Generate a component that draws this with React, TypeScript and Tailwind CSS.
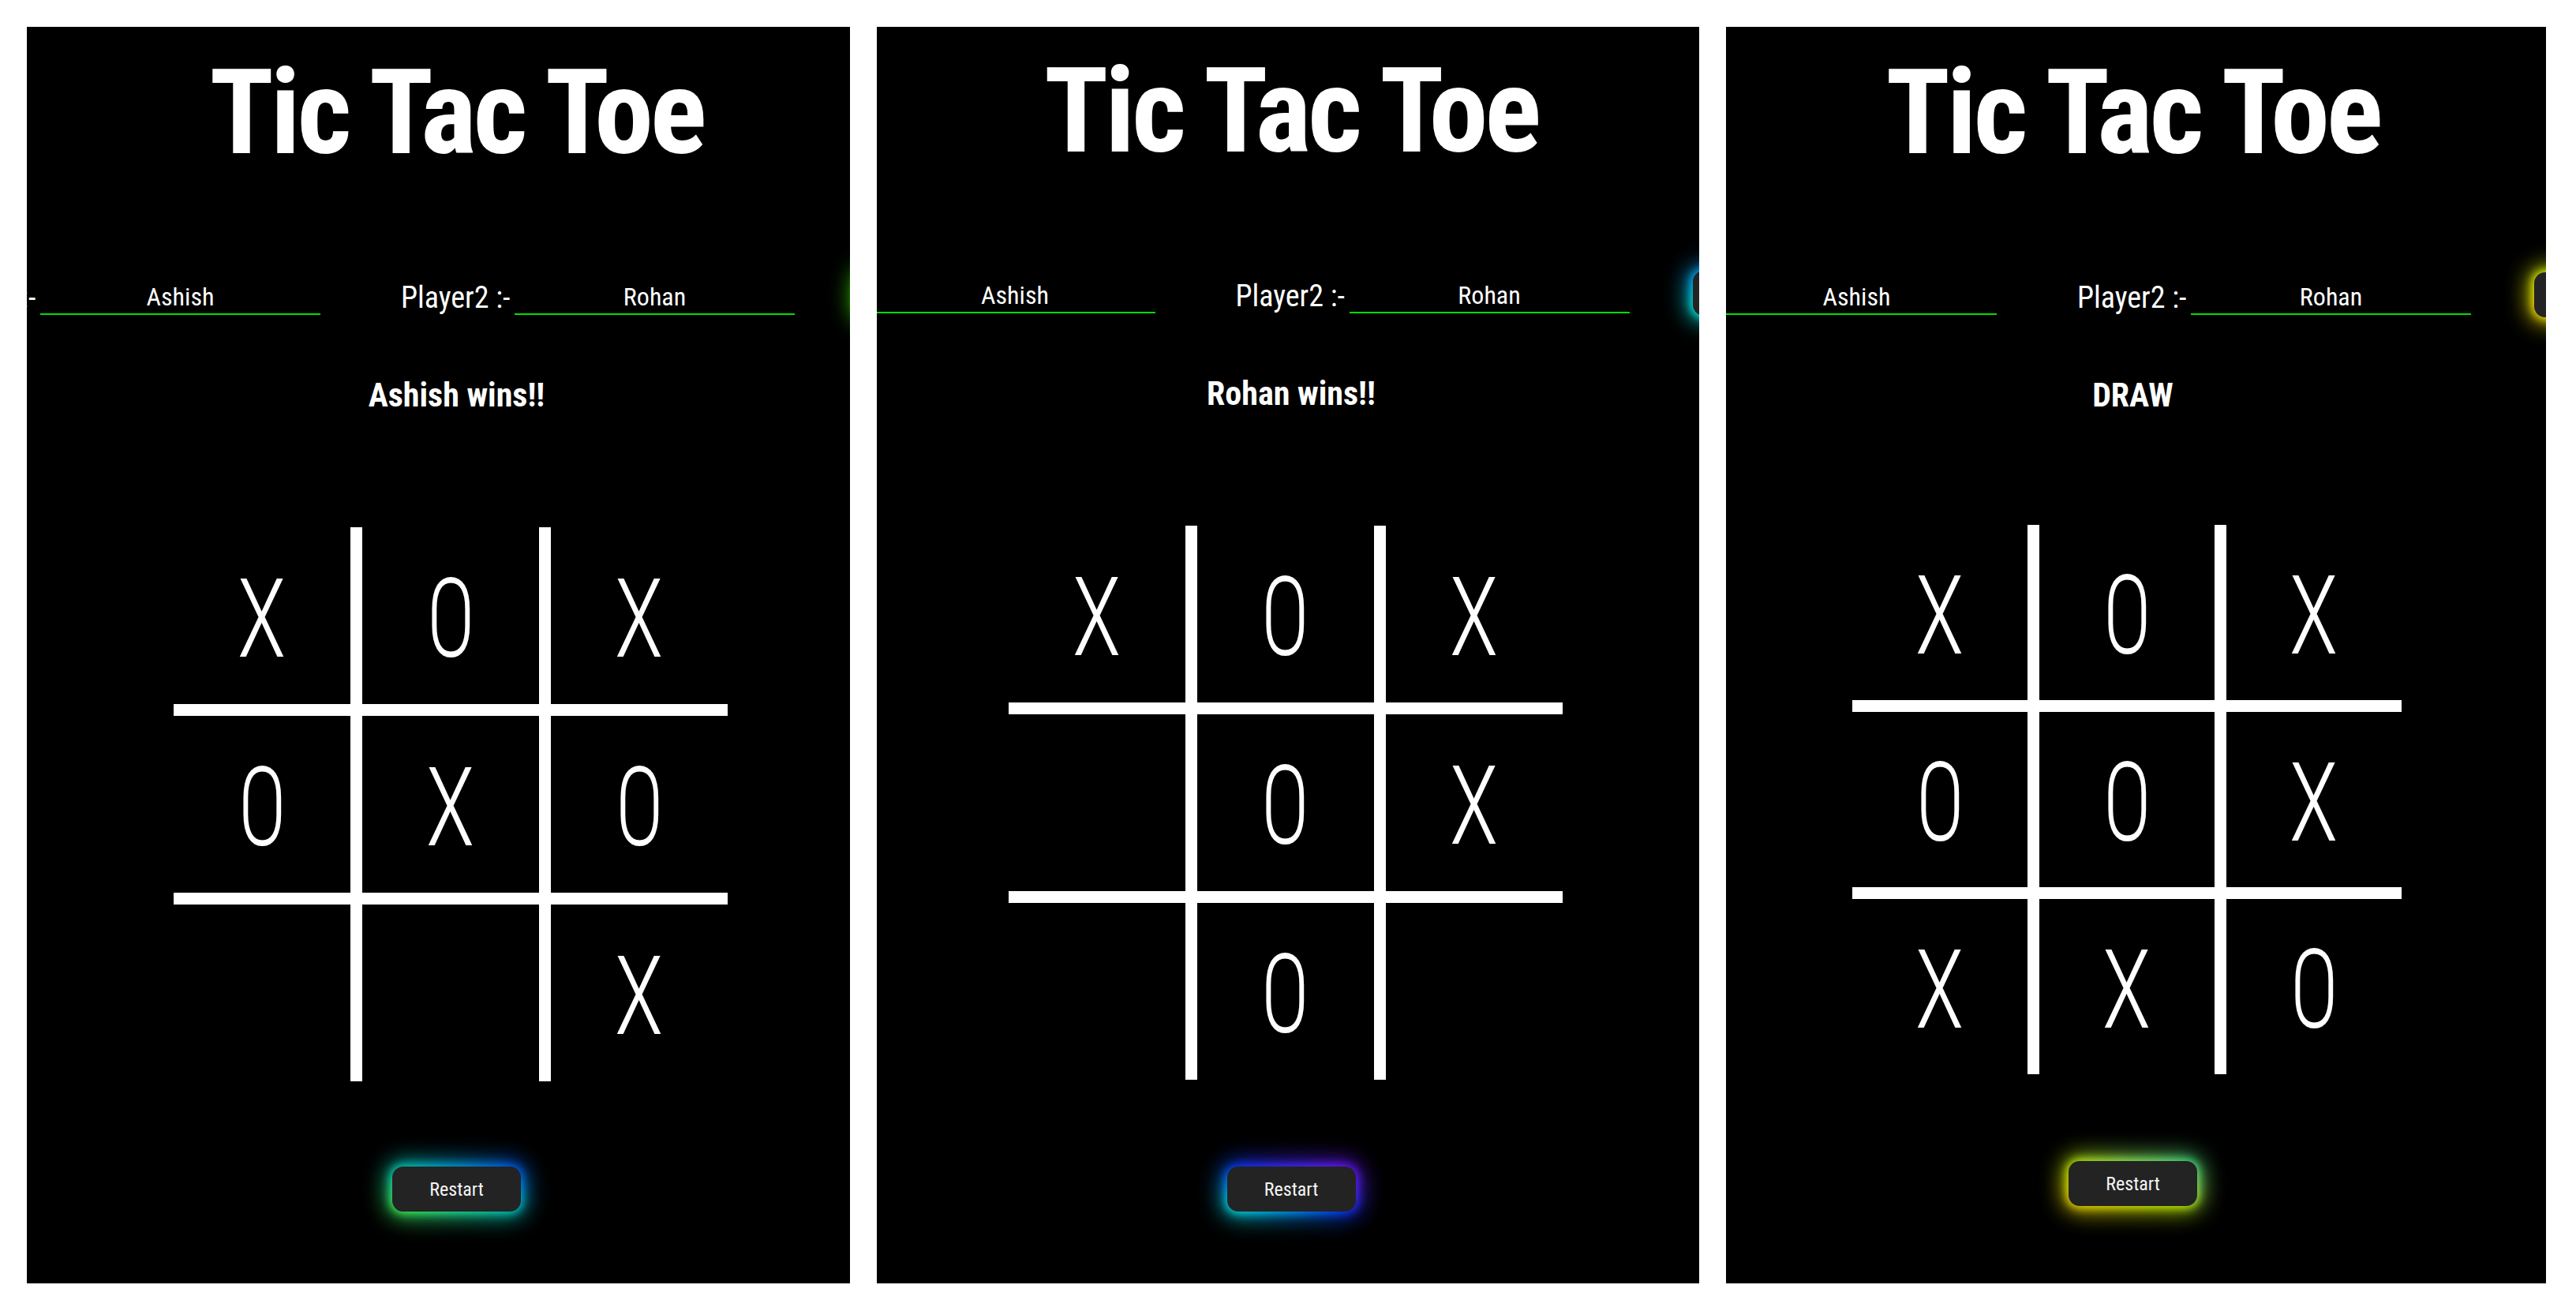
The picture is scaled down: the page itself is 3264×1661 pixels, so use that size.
type Mark = 'X' | 'O' | '';

type PanelConfig = {
  board: Mark[];
  status: string;
  width: string;
  shift: string;
  padTop: string;
  cell: string;
  boardGap: string;
  restartGap: string;
  glow: string;
  topGlow: string;
};

const textFont = "font-['Roboto_Condensed','Roboto',sans-serif]";

const panels: PanelConfig[] = [
  {
    board: ['X', 'O', 'X', 'O', 'X', 'O', '', '', 'X'],
    status: 'Ashish wins!!',
    width: 'w-[1043px]',
    shift: 'ml-[46px]',
    padTop: 'pt-[34px]',
    cell: 'h-[224px] w-[224px]',
    boardGap: 'mt-[146px]',
    restartGap: 'mt-[108px]',
    glow: 'bg-linear-to-tr from-[#48ff00] via-[#00d0c0] to-[#0030ff]',
    topGlow: 'bg-linear-to-tr from-[#48ff00] via-[#30e000] to-[#00d0c0]',
  },
  {
    board: ['X', 'O', 'X', '', 'O', 'X', '', 'O', ''],
    status: 'Rohan wins!!',
    width: 'w-[1042px]',
    shift: 'ml-[8px]',
    padTop: 'pt-[32px]',
    cell: 'h-[224px] w-[224px]',
    boardGap: 'mt-[146px]',
    restartGap: 'mt-[110px]',
    glow: 'bg-linear-to-tr from-[#00ffd5] via-[#0030ff] to-[#7a00ff]',
    topGlow: 'bg-linear-to-tr from-[#00ffd5] via-[#00a0ff] to-[#0030ff]',
  },
  {
    board: ['X', 'O', 'X', 'O', 'O', 'X', 'X', 'X', 'O'],
    status: 'DRAW',
    width: 'w-[1039px]',
    shift: 'mr-[8px]',
    padTop: 'pt-[34px]',
    cell: 'h-[222px] w-[222px]',
    boardGap: 'mt-[143px]',
    restartGap: 'mt-[110px]',
    glow: 'bg-linear-to-tr from-[#ffd800] via-[#b8f000] to-[#00e090]',
    topGlow: 'bg-linear-to-tr from-[#ffe000] via-[#d8f000] to-[#48ff00]',
  },
];

function GlowButton({ label, glow, className }: { label: string; glow: string; className: string }) {
  return (
    <div className={`relative shrink-0 ${className}`}>
      <div className={`absolute -inset-[8px] rounded-[22px] opacity-75 blur-[14px] ${glow}`} />
      <div className={`absolute -inset-[2px] rounded-[16px] blur-[6px] ${glow}`} />
      <button
        className={`relative flex h-[57px] w-[163px] items-center justify-center rounded-[14px] bg-[#232323] text-[24px] leading-none text-[#f4f4f4] ${textFont}`}
      >
        {label}
      </button>
    </div>
  );
}

function Board({ board, cell, gap }: { board: Mark[]; cell: string; gap: string }) {
  return (
    <div className={`grid grid-cols-3 ${gap}`}>
      {board.map((mark, i) => {
        const col = i % 3;
        const row = Math.floor(i / 3);
        return (
          <div
            key={i}
            className={`box-content flex items-center justify-center border-white ${cell} ${
              col < 2 ? 'border-r-[15px]' : ''
            } ${row < 2 ? 'border-b-[15px]' : ''}`}
          >
            <span
              className={`pt-[8px] text-[140px] leading-none font-light text-white ${textFont} ${
                mark === 'O' ? 'scale-x-[0.74]' : 'scale-x-[0.84]'
              }`}
            >
              {mark}
            </span>
          </div>
        );
      })}
    </div>
  );
}

function Panel({ cfg }: { cfg: PanelConfig }) {
  return (
    <div className={`flex h-[1592px] shrink-0 flex-col items-center overflow-hidden bg-black ${cfg.width}`}>
      <div className={`flex flex-col items-center ${cfg.shift} ${cfg.padTop}`}>
        <h1
          className={`h-[150px] text-[150px] leading-[150px] font-bold tracking-[-4px] whitespace-nowrap text-white ${textFont}`}
        >
          Tic Tac Toe
        </h1>

        <div className="mt-[127px] flex items-end">
          <span className={`w-[137px] shrink-0 pb-[3px] text-[38px] leading-[38px] whitespace-nowrap text-white ${textFont}`}>
            Player1 :-
          </span>
          <input
            readOnly
            value="Ashish"
            className={`ml-[7px] h-[44px] w-[355px] shrink-0 border-b-2 border-[#00e000] bg-transparent text-center text-[32px] text-white outline-none ${textFont}`}
          />
          <span
            className={`ml-[102px] w-[137px] shrink-0 pb-[3px] text-[38px] leading-[38px] whitespace-nowrap text-white ${textFont}`}
          >
            Player2 :-
          </span>
          <input
            readOnly
            value="Rohan"
            className={`ml-[7px] h-[44px] w-[355px] shrink-0 border-b-2 border-[#00e000] bg-transparent text-center text-[32px] text-white outline-none ${textFont}`}
          />
          <GlowButton label="Start" glow={cfg.topGlow} className="mb-[-3px] ml-[80px]" />
        </div>

        <p className={`mt-[81px] text-[42px] leading-[42px] font-bold whitespace-nowrap text-white ${textFont}`}>
          {cfg.status}
        </p>

        <Board board={cfg.board} cell={cfg.cell} gap={cfg.boardGap} />

        <GlowButton label="Restart" glow={cfg.glow} className={cfg.restartGap} />
      </div>
    </div>
  );
}

export default function App() {
  return (
    <div className="flex h-[1661px] w-[3264px] gap-[34px] overflow-hidden bg-white pt-[34px] pl-[34px]">
      {panels.map((cfg, i) => (
        <Panel key={i} cfg={cfg} />
      ))}
    </div>
  );
}
